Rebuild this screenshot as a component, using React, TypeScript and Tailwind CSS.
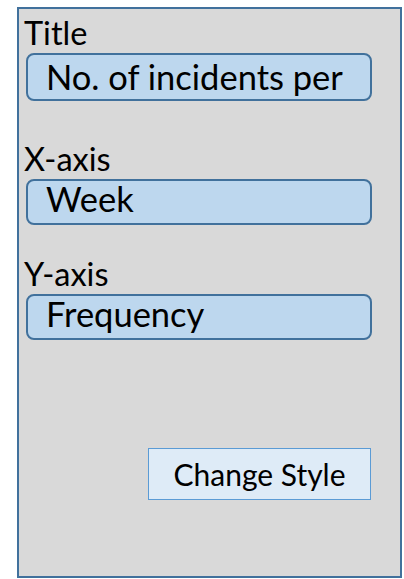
import React from "react";

const fields = [
  { label: "Title", value: "No. of incidents per", wrap: "", box: "h-[48px]" },
  { label: "X-axis", value: "Week", wrap: "mt-[40px]", box: "h-[46px] pb-[7px]" },
  { label: "Y-axis", value: "Frequency", wrap: "mt-[31px]", box: "h-[46px] pb-[7px]" },
];

export default function App() {
  return (
    <div className="w-[404px] h-[579px] bg-white pt-[7px] pl-[17px] font-['Lato',sans-serif] text-black">
      <div className="w-[385px] h-[571px] border-2 border-[#41719c] bg-[#d9d9d9] flex flex-col pl-[5px] pt-[6px]">
        {fields.map((f) => (
          <div key={f.label} className={f.wrap}>
            <div className="text-[32.5px] leading-[36px]">{f.label}</div>
            <div
              className={`${f.box} mt-[2px] ml-[2px] w-[346px] rounded-[8px] border-2 border-[#41719c] bg-[#bdd7ee] flex items-center pl-[18px] text-[34.5px] whitespace-nowrap overflow-hidden`}
            >
              {f.value}
            </div>
          </div>
        ))}
        <div className="w-[346px] ml-[2px] mt-[108px] flex justify-end">
          <button className="w-[223px] h-[52px] mr-[1px] border border-[#5b9bd5] bg-[#deebf7] text-[30px] leading-[36px] flex items-center justify-center">
            Change Style
          </button>
        </div>
      </div>
    </div>
  );
}
